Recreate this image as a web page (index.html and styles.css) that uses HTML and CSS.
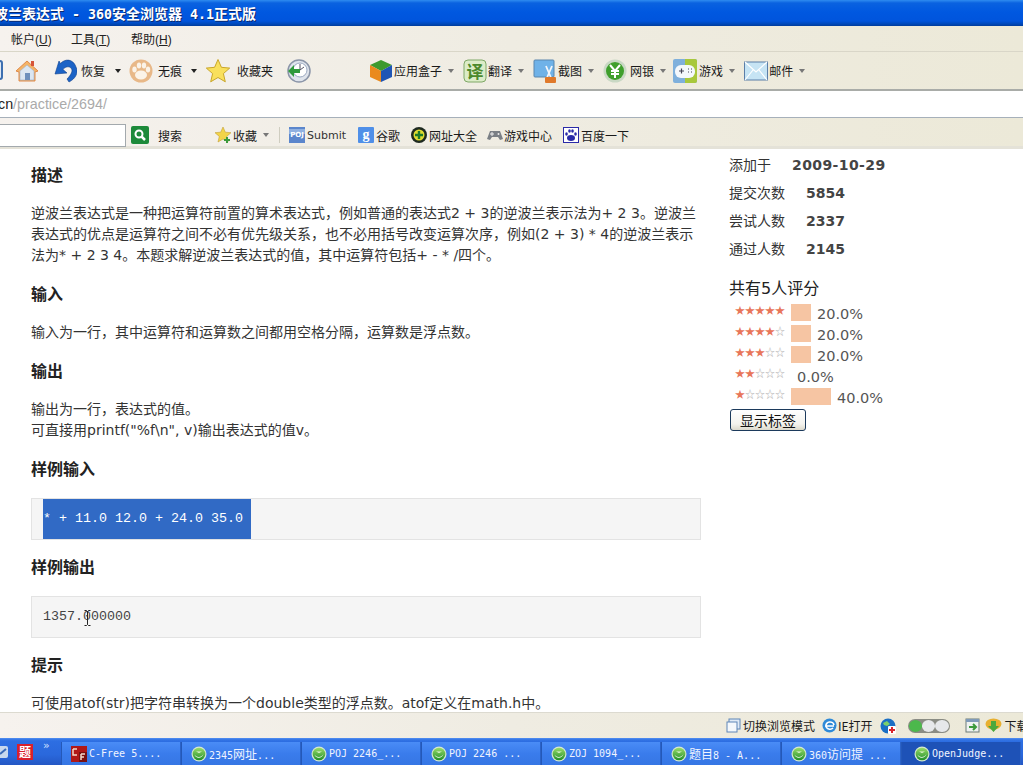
FILE: index.html
```html
<!DOCTYPE html>
<html lang="zh-CN">
<head>
<meta charset="utf-8">
<title>逆波兰表达式 - 360安全浏览器 4.1正式版</title>
<link rel="stylesheet" href="styles.css">
</head>
<body>
<svg class="defs" aria-hidden="true">
  <defs>
    <linearGradient id="gGreen" x1="0" y1="0" x2="0" y2="1"><stop offset="0" stop-color="#9bdc6a"/><stop offset="1" stop-color="#1f8f2a"/></linearGradient>
    <symbol id="globe" viewBox="0 0 16 16">
      <circle cx="8" cy="8" r="7.5" fill="#d5e8d0"/>
      <circle cx="8" cy="8" r="6.3" fill="url(#gGreen)"/>
      <path d="M3.5 8.5c1.5 3 7 3.5 9-.5-1 4.500-8 5-9 .5z" fill="#fff"/>
      <path d="M5 5.500h6l-3 1.500z" fill="#e8f8d8"/>
    </symbol>
    <symbol id="caret" viewBox="0 0 6 4"><path d="M0 0h6L3 4z"/></symbol>
  </defs>
</svg>

<header class="titlebar">
  <span class="title-text">波兰表达式<span class="lat"> - 360</span>安全浏览器<span class="lat"> 4.1</span>正式版</span>
</header>

<nav class="menubar">
  <span class="menu">帐户<span class="mk">(<u>U</u>)</span></span>
  <span class="menu">工具<span class="mk">(<u>T</u>)</span></span>
  <span class="menu">帮助<span class="mk">(<u>H</u>)</span></span>
</nav>

<div class="toolbar">
  <svg class="clip-icon" viewBox="0 0 24 24"><rect x="0" y="2" width="22" height="18" rx="2" fill="#dfe8f4" stroke="#3d6fb0" stroke-width="2"/></svg>
  <svg class="ic m-home" viewBox="0 0 24 24"><path d="M12 2 1 12l3 1v9h16v-9l3-1z" fill="#f4b468" stroke="#e08a4a"/><path d="M5 12 12 6l7 6v9H5z" fill="#dbe6f2" stroke="#9fb0c8" stroke-width=".6"/><rect x="10" y="14" width="5" height="7" fill="#6d8fbc"/><rect x="16" y="2" width="3" height="5" fill="#d6553a"/></svg>
  <svg class="ic m-undo" viewBox="0 0 24 24"><path d="M6 2 2 15l12-1-4-3.500c2-3 6-3.500 8-1.500 2.500 2.500 0 7-4 11l2 3c6-3 10-9 7-15C20-.5 12-.5 7.500 4.500z" fill="#1c63c6" stroke="#0f3f8c" stroke-width=".6"/></svg>
  <span class="lb m-4">恢复</span>
  <svg class="cr dark m-10" viewBox="0 0 6 4"><use href="#caret"/></svg>
  <svg class="ic m-8" viewBox="0 0 24 24"><circle cx="12" cy="12" r="11.500" fill="#e8b888"/><ellipse cx="12" cy="16" rx="6" ry="4.500" fill="#fbf3e8"/><ellipse cx="5.500" cy="10.500" rx="2.200" ry="3" fill="#fbf3e8"/><ellipse cx="10" cy="6.500" rx="2.200" ry="3" fill="#fbf3e8"/><ellipse cx="15" cy="6.500" rx="2.200" ry="3" fill="#fbf3e8"/><ellipse cx="19" cy="10.500" rx="2.200" ry="3" fill="#fbf3e8"/></svg>
  <span class="lb m-5">无痕</span>
  <svg class="cr dark m-9" viewBox="0 0 6 4"><use href="#caret"/></svg>
  <svg class="ic m-9" viewBox="0 0 24 24"><path d="M12 .5l3.400 7.800 8.300.8-6.300 5.500 1.900 8.200L12 18.500l-7.300 4.300 1.900-8.200L.3 9.100l8.300-.8z" fill="#f9e05c" stroke="#c9a62a"/></svg>
  <span class="lb m-7">收藏夹</span>
  <svg class="ic m-14" viewBox="0 0 24 24"><circle cx="12" cy="12" r="11" fill="#dfe4ec" stroke="#8b95a8" stroke-width="1.500"/><circle cx="13" cy="11" r="7" fill="#fff" stroke="#9aa8c0"/><path d="M13 5v6l4-3" fill="none" stroke="#556" stroke-width="1"/><path d="M1 12l6-6v4h6v4H7v4z" fill="#2f9a3c"/></svg>

  <svg class="ic m-58" viewBox="0 0 24 24"><path d="M12 1 1 6l11 6 11-6z" fill="#3d9a2e"/><path d="M1 6v12l11 5V12z" fill="#ea8a1e"/><path d="M23 6v12l-11 5V12z" fill="#1f55b5"/></svg>
  <span class="lb m-1">应用盒子</span>
  <svg class="cr m-6" viewBox="0 0 6 4"><use href="#caret"/></svg>
  <svg class="ic m-9" viewBox="0 0 24 24"><rect x="1" y="1" width="22" height="22" rx="4" fill="#dcecc8" stroke="#7fa866"/></svg>
  <span class="yi">译</span>
  <span class="lb m-1">翻译</span>
  <svg class="cr m-6" viewBox="0 0 6 4"><use href="#caret"/></svg>
  <svg class="ic m-9" viewBox="0 0 24 24"><rect x="1" y="1" width="20" height="17" rx="1" fill="#6fb2e8" stroke="#5a86ad"/><path d="M13 7l3 7 3-7M16 14l-3 7M16 14l3 7" fill="none" stroke="#f4f6fa" stroke-width="1.800"/><rect x="12" y="18" width="11" height="6" rx="1" fill="#e0792a"/></svg>
  <span class="lb m-1">截图</span>
  <svg class="cr m-6" viewBox="0 0 6 4"><use href="#caret"/></svg>
  <svg class="ic m-9" viewBox="0 0 24 24"><circle cx="12" cy="12" r="11.500" fill="#c9d8c4"/><circle cx="12" cy="12" r="9" fill="#3f9f2c"/><path d="M7 6l5 6 5-6M12 12v7M8 12h8M8 15h8" fill="none" stroke="#fff" stroke-width="2"/></svg>
  <span class="lb m-3">网银</span>
  <svg class="cr m-6" viewBox="0 0 6 4"><use href="#caret"/></svg>
  <svg class="ic m-7" viewBox="0 0 24 24"><rect x="0" y="0" width="24" height="24" rx="2" fill="#7fb0dc"/><path d="M12 0h10a2 2 0 0 1 2 2v20a2 2 0 0 1-2 2H12z" fill="#a8c83c"/><rect x="2" y="6" width="20" height="13" rx="6" fill="#f4f8fc"/><path d="M6 12h5M8.500 9.500v5M15 10h1M18 10h1M15 13h1M18 13h1" stroke="#445" stroke-width="1.200"/></svg>
  <span class="lb m-2">游戏</span>
  <svg class="cr m-6" viewBox="0 0 6 4"><use href="#caret"/></svg>
  <svg class="ic m-9" viewBox="0 0 24 24"><rect x=".5" y="3" width="23" height="18" fill="#c6e4f4" stroke="#5b7ea8"/><path d="M1 3l11 10L23 3M1 21l8-10M23 21l-8-10" fill="none" stroke="#fff" stroke-width="1.200"/></svg>
  <span class="lb m-1">邮件</span>
  <svg class="cr m-6" viewBox="0 0 6 4"><use href="#caret"/></svg>
</div>

<div class="addressbar"><span class="host">cn</span><span class="path">/practice/2694/</span></div>

<div class="bookmarks">
  <div class="search-input"></div>
  <svg class="bi search-ic" viewBox="0 0 18 18"><rect width="18" height="18" rx="2" fill="#1d8a3a"/><circle cx="8" cy="8" r="3.500" fill="none" stroke="#fff" stroke-width="2"/><path d="M10.500 10.500 14 14" stroke="#fff" stroke-width="2.500"/></svg>
  <span class="bk m-9">搜索</span>
  <svg class="bi m-33" viewBox="0 0 16 16"><path d="M8 0l2.300 5.200 5.700.5-4.300 3.700 1.300 5.600L8 12l-5 3 1.300-5.600L0 5.700l5.700-.5z" fill="#f2d448" stroke="#c4a030" stroke-width=".6"/><path d="M12 10v6M9 13h6" stroke="#3c9a3c" stroke-width="2"/></svg>
  <span class="bk m-2">收藏</span>
  <svg class="cr m-6" viewBox="0 0 6 4"><use href="#caret"/></svg>
  <span class="bsep"></span>
  <svg class="bi m-9" viewBox="0 0 16 16"><rect width="16" height="16" fill="#5b86cc"/><rect y="2" width="16" height="5" fill="#8fb0e0"/></svg>
  <span class="poj">POJ</span>
  <span class="bk sub m-2">Submit</span>
  <svg class="bi m-12" viewBox="0 0 16 16"><rect width="16" height="16" rx="1" fill="#4f8fe8"/></svg>
  <span class="gg">g</span>
  <span class="bk m-2">谷歌</span>
  <svg class="bi m-11" viewBox="0 0 16 16"><circle cx="8" cy="8" r="8" fill="#1e2a20"/><circle cx="8" cy="8" r="5.500" fill="#e0dc30"/><path d="M8 4v8M4 8h8" stroke="#1d7a2a" stroke-width="2.400"/></svg>
  <span class="bk m-2">网址大全</span>
  <svg class="bi m-10" viewBox="0 0 16 16"><path d="M3 4h10l3 8-3 1-2-3H5l-2 3-3-1z" fill="#7a7f85"/><circle cx="11.500" cy="7" r="1" fill="#eee"/><path d="M3 7h4M5 5v4" stroke="#eee"/></svg>
  <span class="bk m-1">游戏中心</span>
  <svg class="bi m-11" viewBox="0 0 16 16"><rect x=".5" y=".5" width="15" height="15" fill="#fff" stroke="#2a2aa8"/><ellipse cx="8" cy="11" rx="4" ry="3" fill="#2a2aa8"/><ellipse cx="3.500" cy="7" rx="1.300" ry="1.800" fill="#2a2aa8"/><ellipse cx="6.500" cy="4" rx="1.300" ry="1.800" fill="#2a2aa8"/><ellipse cx="9.500" cy="4" rx="1.300" ry="1.800" fill="#2a2aa8"/><ellipse cx="12.500" cy="7" rx="1.300" ry="1.800" fill="#2a2aa8"/></svg>
  <span class="bk m-2">百度一下</span>
</div>

<main class="page">
  <article class="problem">
    <h3>描述</h3>
    <p>逆波兰表达式是一种把运算符前置的算术表达式，例如普通的表达式2 + 3的逆波兰表示法为+ 2 3。逆波兰<br>表达式的优点是运算符之间不必有优先级关系，也不必用括号改变运算次序，例如(2 + 3) * 4的逆波兰表示<br>法为* + 2 3 4。本题求解逆波兰表达式的值，其中运算符包括+ - * /四个。</p>
    <h3>输入</h3>
    <p>输入为一行，其中运算符和运算数之间都用空格分隔，运算数是浮点数。</p>
    <h3>输出</h3>
    <p>输出为一行，表达式的值。<br>可直接用printf("%f\n", v)输出表达式的值v。</p>
    <h3>样例输入</h3>
    <pre class="sample"><span class="selected">* + 11.0 12.0 + 24.0 35.0</span></pre>
    <h3>样例输出</h3>
    <pre class="sample output">1357.000000<svg class="ibeam" viewBox="0 0 7 16"><path d="M.5.500h2l1 1 1-1h2M3.500 1.500v13M.5 15.500h2l1-1 1 1h2" fill="none" stroke="#222"/></svg></pre>
    <h3>提示</h3>
    <p>可使用atof(str)把字符串转换为一个double类型的浮点数。atof定义在math.h中。</p>
  </article>

  <aside class="side">
    <dl class="stats">
      <div><dt>添加于</dt><dd class="date">2009-10-29</dd></div>
      <div><dt>提交次数</dt><dd>5854</dd></div>
      <div><dt>尝试人数</dt><dd>2337</dd></div>
      <div><dt>通过人数</dt><dd>2145</dd></div>
    </dl>
    <h4>共有5人评分</h4>
    <ul class="ratings">
      <li><span class="stars"><b>★★★★★</b></span><span class="bar w20"></span><span class="pct">20.0%</span></li>
      <li><span class="stars"><b>★★★★</b>☆</span><span class="bar w20"></span><span class="pct">20.0%</span></li>
      <li><span class="stars"><b>★★★</b>☆☆</span><span class="bar w20"></span><span class="pct">20.0%</span></li>
      <li><span class="stars"><b>★★</b>☆☆☆</span><span class="bar w0"></span><span class="pct">0.0%</span></li>
      <li><span class="stars"><b>★</b>☆☆☆☆</span><span class="bar w40"></span><span class="pct">40.0%</span></li>
    </ul>
    <button class="tag-btn" type="button">显示标签</button>
  </aside>
</main>

<footer class="statusbar">
  <svg class="si" viewBox="0 0 15 15"><rect x="3" y="1" width="11" height="10" fill="#dfeaf6" stroke="#5f86b8"/><rect x="1" y="4" width="10" height="10" fill="#f4f8fc" stroke="#5f86b8"/></svg>
  <span class="st m-2">切换浏览模式</span>
  <svg class="si m-7" viewBox="0 0 15 15"><circle cx="7.500" cy="7.500" r="7" fill="#2f8ad8"/><path d="M3 8h9M4 8a4 3.500 0 0 1 8-1M4 8a4 3.500 0 0 0 7 2" fill="none" stroke="#fff" stroke-width="1.600"/></svg>
  <span class="st m-1">IE打开</span>
  <svg class="si wide-ic m-7" viewBox="0 0 16 16"><circle cx="8" cy="8" r="7.500" fill="#1b6fc4"/><path d="M3 5l4-2 3 3-3 2-3-1zM9 10l3-2 2 2-3 3z" fill="#7ccf6a"/><rect x="8" y="8" width="8" height="8" rx="1" fill="#fff"/><path d="M12 9v6M9 12h6" stroke="#d8262c" stroke-width="2"/></svg>
  <span class="lights m-12"><i class="on"></i><i></i><i></i></span>
  <svg class="si m-15" viewBox="0 0 15 15"><rect x="1" y="1" width="13" height="13" fill="#eef2f0" stroke="#6c7c78"/><rect x="1" y="1" width="13" height="3" fill="#7f9ab8"/><path d="M4 9h6M8 6l3 3-3 3" stroke="#3c9a3c" stroke-width="2" fill="none"/></svg>
  <svg class="si dl m-5" viewBox="0 0 17 15"><ellipse cx="8.500" cy="6" rx="8" ry="5.500" fill="#e8b030"/><path d="M6 3h5v5h3l-5.500 6L3 8h3z" fill="#4ca83c"/></svg>
  <span class="st m-3">下载</span>
</footer>

<div class="taskbar">
  <svg class="tray-ic" viewBox="0 0 10 14"><rect x="-6" y="1" width="14" height="12" rx="2" fill="#c8d8ee"/><path d="M0 9l6-5" stroke="#3a6ab8" stroke-width="2"/></svg>
  <span class="qq">题</span>
  <span class="more">»</span>
  <div class="tasks">
    <div class="task"><svg class="cf" viewBox="0 0 16 16"><rect width="16" height="16" fill="#b01818"/><rect x="8" y="6" width="8" height="10" fill="#7a1010"/><path d="M2 3h4M2 3v6h4M10 8h4M10 8v6M10 11h3" fill="none" stroke="#f4d8c8" stroke-width="1.500"/></svg><span>C-Free 5....</span></div>
    <div class="task"><svg class="g"><use href="#globe"/></svg><span>2345<b>网址</b>...</span></div>
    <div class="task"><svg class="g"><use href="#globe"/></svg><span>POJ 2246_...</span></div>
    <div class="task"><svg class="g"><use href="#globe"/></svg><span>POJ 2246 ...</span></div>
    <div class="task"><svg class="g"><use href="#globe"/></svg><span>ZOJ 1094_...</span></div>
    <div class="task"><svg class="g"><use href="#globe"/></svg><span><b>题目</b>8 - A...</span></div>
    <div class="task"><svg class="g"><use href="#globe"/></svg><span>360<b>访问提</b> ...</span></div>
    <div class="task active"><svg class="g"><use href="#globe"/></svg><span>OpenJudge...</span></div>
  </div>
</div>
</body>
</html>
```

FILE: styles.css
```css
* { box-sizing: border-box; }
html, body { margin: 0; padding: 0; height: 100%; }
body {
  width: 1023px;
  height: 765px;
  overflow: hidden;
  display: flex;
  flex-direction: column;
  font-family: "DejaVu Sans", "Noto Sans CJK SC", sans-serif;
  color: #222;
  background: #fff;
}
.defs { width: 0; height: 0; position: absolute; }

/* title bar */
.titlebar {
  height: 26px;
  flex: none;
  display: flex;
  align-items: center;
  background: linear-gradient(#2f8cf0 0, #0a62e0 3px, #0058e0 12px, #0054dc 21px, #0048b8 24px, #003c9c 26px);
  overflow: hidden;
}
.title-text {
  margin-left: -6px;
  padding-bottom: 1px;
  font: bold 14px "Noto Sans CJK SC", sans-serif;
  color: #fff;
  text-shadow: 1px 1px 0 #0a2a70;
  white-space: pre;
}
.lat { font: bold 13.3px "DejaVu Sans Mono", monospace; }

/* browser chrome */
.menubar, .toolbar, .bookmarks, .statusbar {
  background: linear-gradient(90deg, #f6f2ee 0, #efece2 50%, #ece9d8 100%);
}
.menubar {
  height: 26px;
  flex: none;
  display: flex;
  align-items: center;
  gap: 18px;
  padding-left: 11px;
  font: 12px "Noto Sans CJK SC", sans-serif;
  border-bottom: 1px solid #d9d6c8;
}
.menu { width: 42px; white-space: nowrap; }
.mk { font: 12px "Liberation Sans", sans-serif; }
.toolbar {
  height: 39px;
  flex: none;
  display: flex;
  align-items: center;
  border-bottom: 2px solid #a9aca8;
  font: 12px "Noto Sans CJK SC", sans-serif;
  color: #1a1a1a;
}
.clip-icon { width: 24px; height: 24px; margin-left: -20px; flex: none; }
.ic { width: 24px; height: 24px; flex: none; }
.lb { flex: none; }
.cr { width: 6px; height: 4px; flex: none; fill: #777; }
.cr.dark { fill: #222; }
.yi {
  width: 24px;
  margin-left: -24px;
  text-align: center;
  font: bold 17px "Noto Sans CJK SC", sans-serif;
  color: #4c8a2c;
  flex: none;
}
.m-home { margin-left: 11px; }
.m-undo { margin-left: 14px; }
.m-1 { margin-left: 1px; }
.m-2 { margin-left: 2px; }
.m-3 { margin-left: 3px; }
.m-4 { margin-left: 4px; }
.m-5 { margin-left: 5px; }
.m-6 { margin-left: 6px; }
.m-7 { margin-left: 7px; }
.m-8 { margin-left: 8px; }
.m-9 { margin-left: 9px; }
.m-10 { margin-left: 10px; }
.m-11 { margin-left: 11px; }
.m-12 { margin-left: 12px; }
.m-14 { margin-left: 14px; }
.m-15 { margin-left: 15px; }
.m-33 { margin-left: 33px; }
.m-58 { margin-left: 58px; }

.addressbar {
  height: 27px;
  flex: none;
  background: #fff;
  border-bottom: 1px solid #a6b0ba;
  display: flex;
  align-items: center;
  overflow: hidden;
  font: 14.3px "Liberation Sans", sans-serif;
}
.host { color: #222; margin-left: -2px; }
.path { color: #aaa; }

.bookmarks {
  height: 31px;
  flex: none;
  display: flex;
  align-items: center;
  font: 12px "Noto Sans CJK SC", sans-serif;
  color: #1a1a1a;
  border-bottom: 3px solid #e4e2d8;
  padding-top: 6px;
}
.search-input {
  width: 126px;
  height: 23px;
  background: #fff;
  border: 1px solid #a3a9ad;
  border-left: 0;
  flex: none;
}
.bi { width: 16px; height: 16px; flex: none; }
.search-ic { width: 18px; height: 18px; margin-left: 5px; }
.bk { flex: none; }
.sub { font: 11px "DejaVu Sans", sans-serif; color: #333; }
.bsep { width: 1px; height: 16px; background: #cfcdc0; margin-left: 10px; flex: none; }
.poj {
  margin-left: -16px;
  width: 16px;
  text-align: center;
  font: bold 7px "DejaVu Sans", sans-serif;
  color: #fff;
  flex: none;
}
.gg {
  margin-left: -16px;
  width: 16px;
  text-align: center;
  font: bold 14px "Liberation Serif", serif;
  color: #fff;
  flex: none;
}

/* page */
.page {
  flex: 1;
  min-height: 0;
  overflow: hidden;
  background: #fff;
  display: flex;
  padding-left: 31px;
  color: #333;
  font-size: 14px;
}
.problem { width: 670px; flex: none; padding-top: 14px; }
.problem h3 {
  margin: 0 0 18px;
  font: bold 16px/22px "Noto Sans CJK SC", sans-serif;
  color: #222;
}
.problem p {
  margin: 0 0 16px;
  font-family: "DejaVu Sans", "Noto Sans CJK SC", sans-serif;
  font-size: 14px;
  line-height: 21px;
  white-space: nowrap;
}
.sample {
  margin: 19px 0 15px;
  height: 42px;
  padding: 0 0 0 11px;
  font: 13.33px/40px "Liberation Mono", monospace;
  color: #444;
  background: #f5f5f5;
  border: 1px solid #e3e3e3;
  position: relative;
}
.selected {
  display: inline-block;
  height: 40px;
  vertical-align: top;
  padding-right: 8px;
  background: #316ac5;
  color: #fff;
}
.ibeam { position: absolute; left: 52px; top: 13px; width: 7px; height: 16px; }

.side { margin-left: 28px; padding-top: 1px; width: 200px; flex: none; }
.stats { margin: 0; }
.stats div { display: flex; gap: 21px; height: 28px; align-items: center; }
.stats dt { font: 14px "Noto Sans CJK SC", sans-serif; color: #333; }
.stats dd { margin: 0; padding-top: 2px; font: bold 14px "DejaVu Sans", sans-serif; color: #444; }
.stats .date { letter-spacing: .4px; }
.side h4 {
  margin: 15px 0 3px;
  font: normal 16px/24px "DejaVu Sans", "Noto Sans CJK SC", sans-serif;
  color: #222;
}
.ratings { list-style: none; margin: 0; padding: 0; }
.ratings li { display: flex; align-items: flex-start; height: 21px; padding-left: 6px; }
.stars {
  width: 50px;
  margin-right: 6px;
  flex: none;
  font: 10px/11px "Noto Sans CJK SC", sans-serif;
  color: #b4b4b4;
  white-space: nowrap;
}
.stars b { font-weight: normal; color: #e8765a; }
.bar { height: 17px; background: #f6c5a3; flex: none; }
.w0 { width: 0; }
.w20 { width: 20px; }
.w40 { width: 40px; }
.pct { margin-left: 6px; font-size: 14.500px; line-height: 21px; color: #555; }
.tag-btn {
  display: block;
  margin: 0 0 0 1px;
  width: 76px;
  height: 22px;
  padding: 0;
  font: 14px/18px "Noto Sans CJK SC", sans-serif;
  color: #111;
  background: linear-gradient(#fff, #f4f3ee 70%, #dcd9cc);
  border: 1px solid #1c3a5c;
  border-radius: 3px;
}

/* status bar */
.statusbar {
  height: 26px;
  flex: none;
  display: flex;
  align-items: center;
  padding-left: 726px;
  border-top: 1px solid #dcdad0;
  overflow: hidden;
  font: 12px "Noto Sans CJK SC", sans-serif;
  color: #1a1a1a;
  white-space: nowrap;
}
.si { width: 15px; height: 15px; flex: none; }
.si.wide-ic { width: 16px; height: 16px; }
.si.dl { width: 17px; }
.st { flex: none; }
.lights { display: flex; flex: none; width: 42px; height: 14px; background: #8a8c84; border-radius: 7px; padding: 1px; }
.lights i { flex: 1; border-radius: 50%; background: #e6e8ea; }
.lights i.on { background: #4cb84c; }

/* task bar */
.taskbar {
  height: 27px;
  flex: none;
  display: flex;
  align-items: flex-end;
  background: linear-gradient(#3a7be8 0, #2d6ee2 2px, #2a68dc 60%, #2457c4 100%);
  border-top: 1px solid #4a88ee;
  overflow: hidden;
}
.tray-ic { width: 10px; height: 14px; flex: none; align-self: center; }
.qq {
  width: 16px;
  height: 16px;
  margin-left: 7px;
  flex: none;
  align-self: center;
  background: #d8202c;
  color: #fff;
  font: bold 12px/16px "Noto Sans CJK SC", sans-serif;
  text-align: center;
}
.more { margin-left: 10px; width: 18px; color: #cfe0ff; font-size: 11px; align-self: flex-start; flex: none; }
.tasks { display: flex; height: 23px; flex: none; }
.task {
  width: 120px;
  height: 23px;
  display: flex;
  align-items: center;
  padding-left: 9px;
  gap: 2px;
  background: linear-gradient(#4a8cf6, #3a7cec 50%, #3676e4);
  border-left: 1px solid #2458b8;
  border-right: 1px solid #2a62c8;
  color: #f0f4ff;
  font: 10px "DejaVu Sans Mono", monospace;
  white-space: pre;
  overflow: hidden;
  flex: none;
}
.task b { font: 12px "Noto Sans CJK SC", sans-serif; }
.task.active { background: #1e52b7; padding-left: 12px; }
.task .g, .task .cf { width: 16px; height: 16px; flex: none; }
```
